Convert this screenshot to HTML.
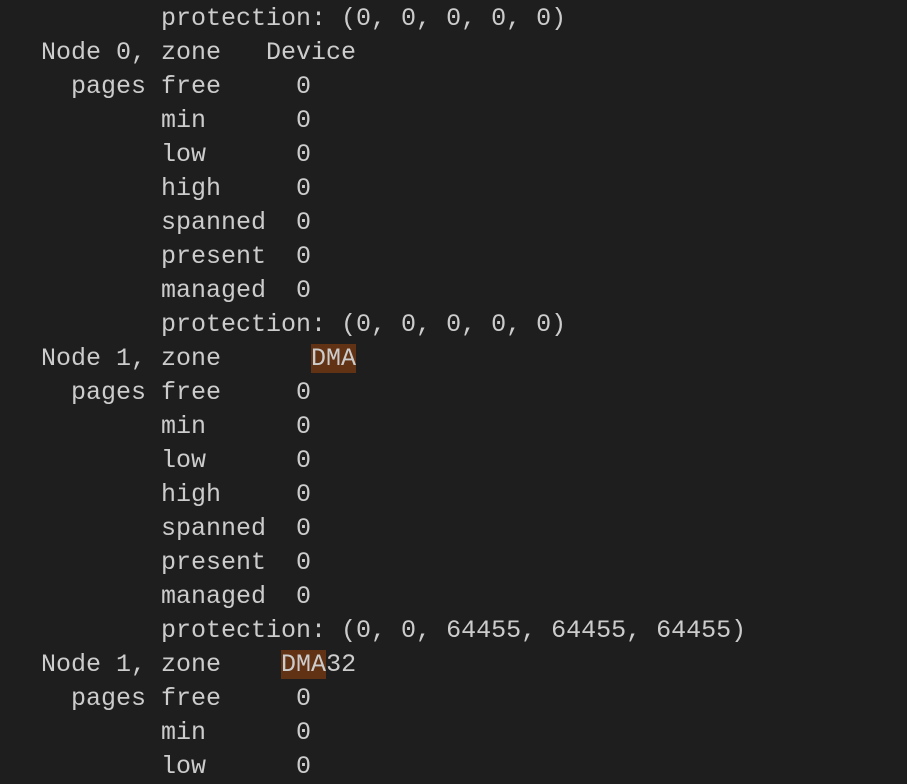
<!DOCTYPE html>
<html><head><meta charset="utf-8"><style>
html,body{margin:0;padding:0;background:#1e1e1e;width:907px;height:767px;overflow:hidden}
pre{position:absolute;left:41px;top:2px;margin:0;font-family:"Liberation Mono",monospace;font-size:25px;line-height:34px;color:#cccccc}
.h{background:#613214}
</style></head><body>
<pre>        protection: (0, 0, 0, 0, 0)
Node 0, zone   Device
  pages free     0
        min      0
        low      0
        high     0
        spanned  0
        present  0
        managed  0
        protection: (0, 0, 0, 0, 0)
Node 1, zone      <span class="h">DMA</span>
  pages free     0
        min      0
        low      0
        high     0
        spanned  0
        present  0
        managed  0
        protection: (0, 0, 64455, 64455, 64455)
Node 1, zone    <span class="h">DMA</span>32
  pages free     0
        min      0
        low      0</pre>
</body></html>
